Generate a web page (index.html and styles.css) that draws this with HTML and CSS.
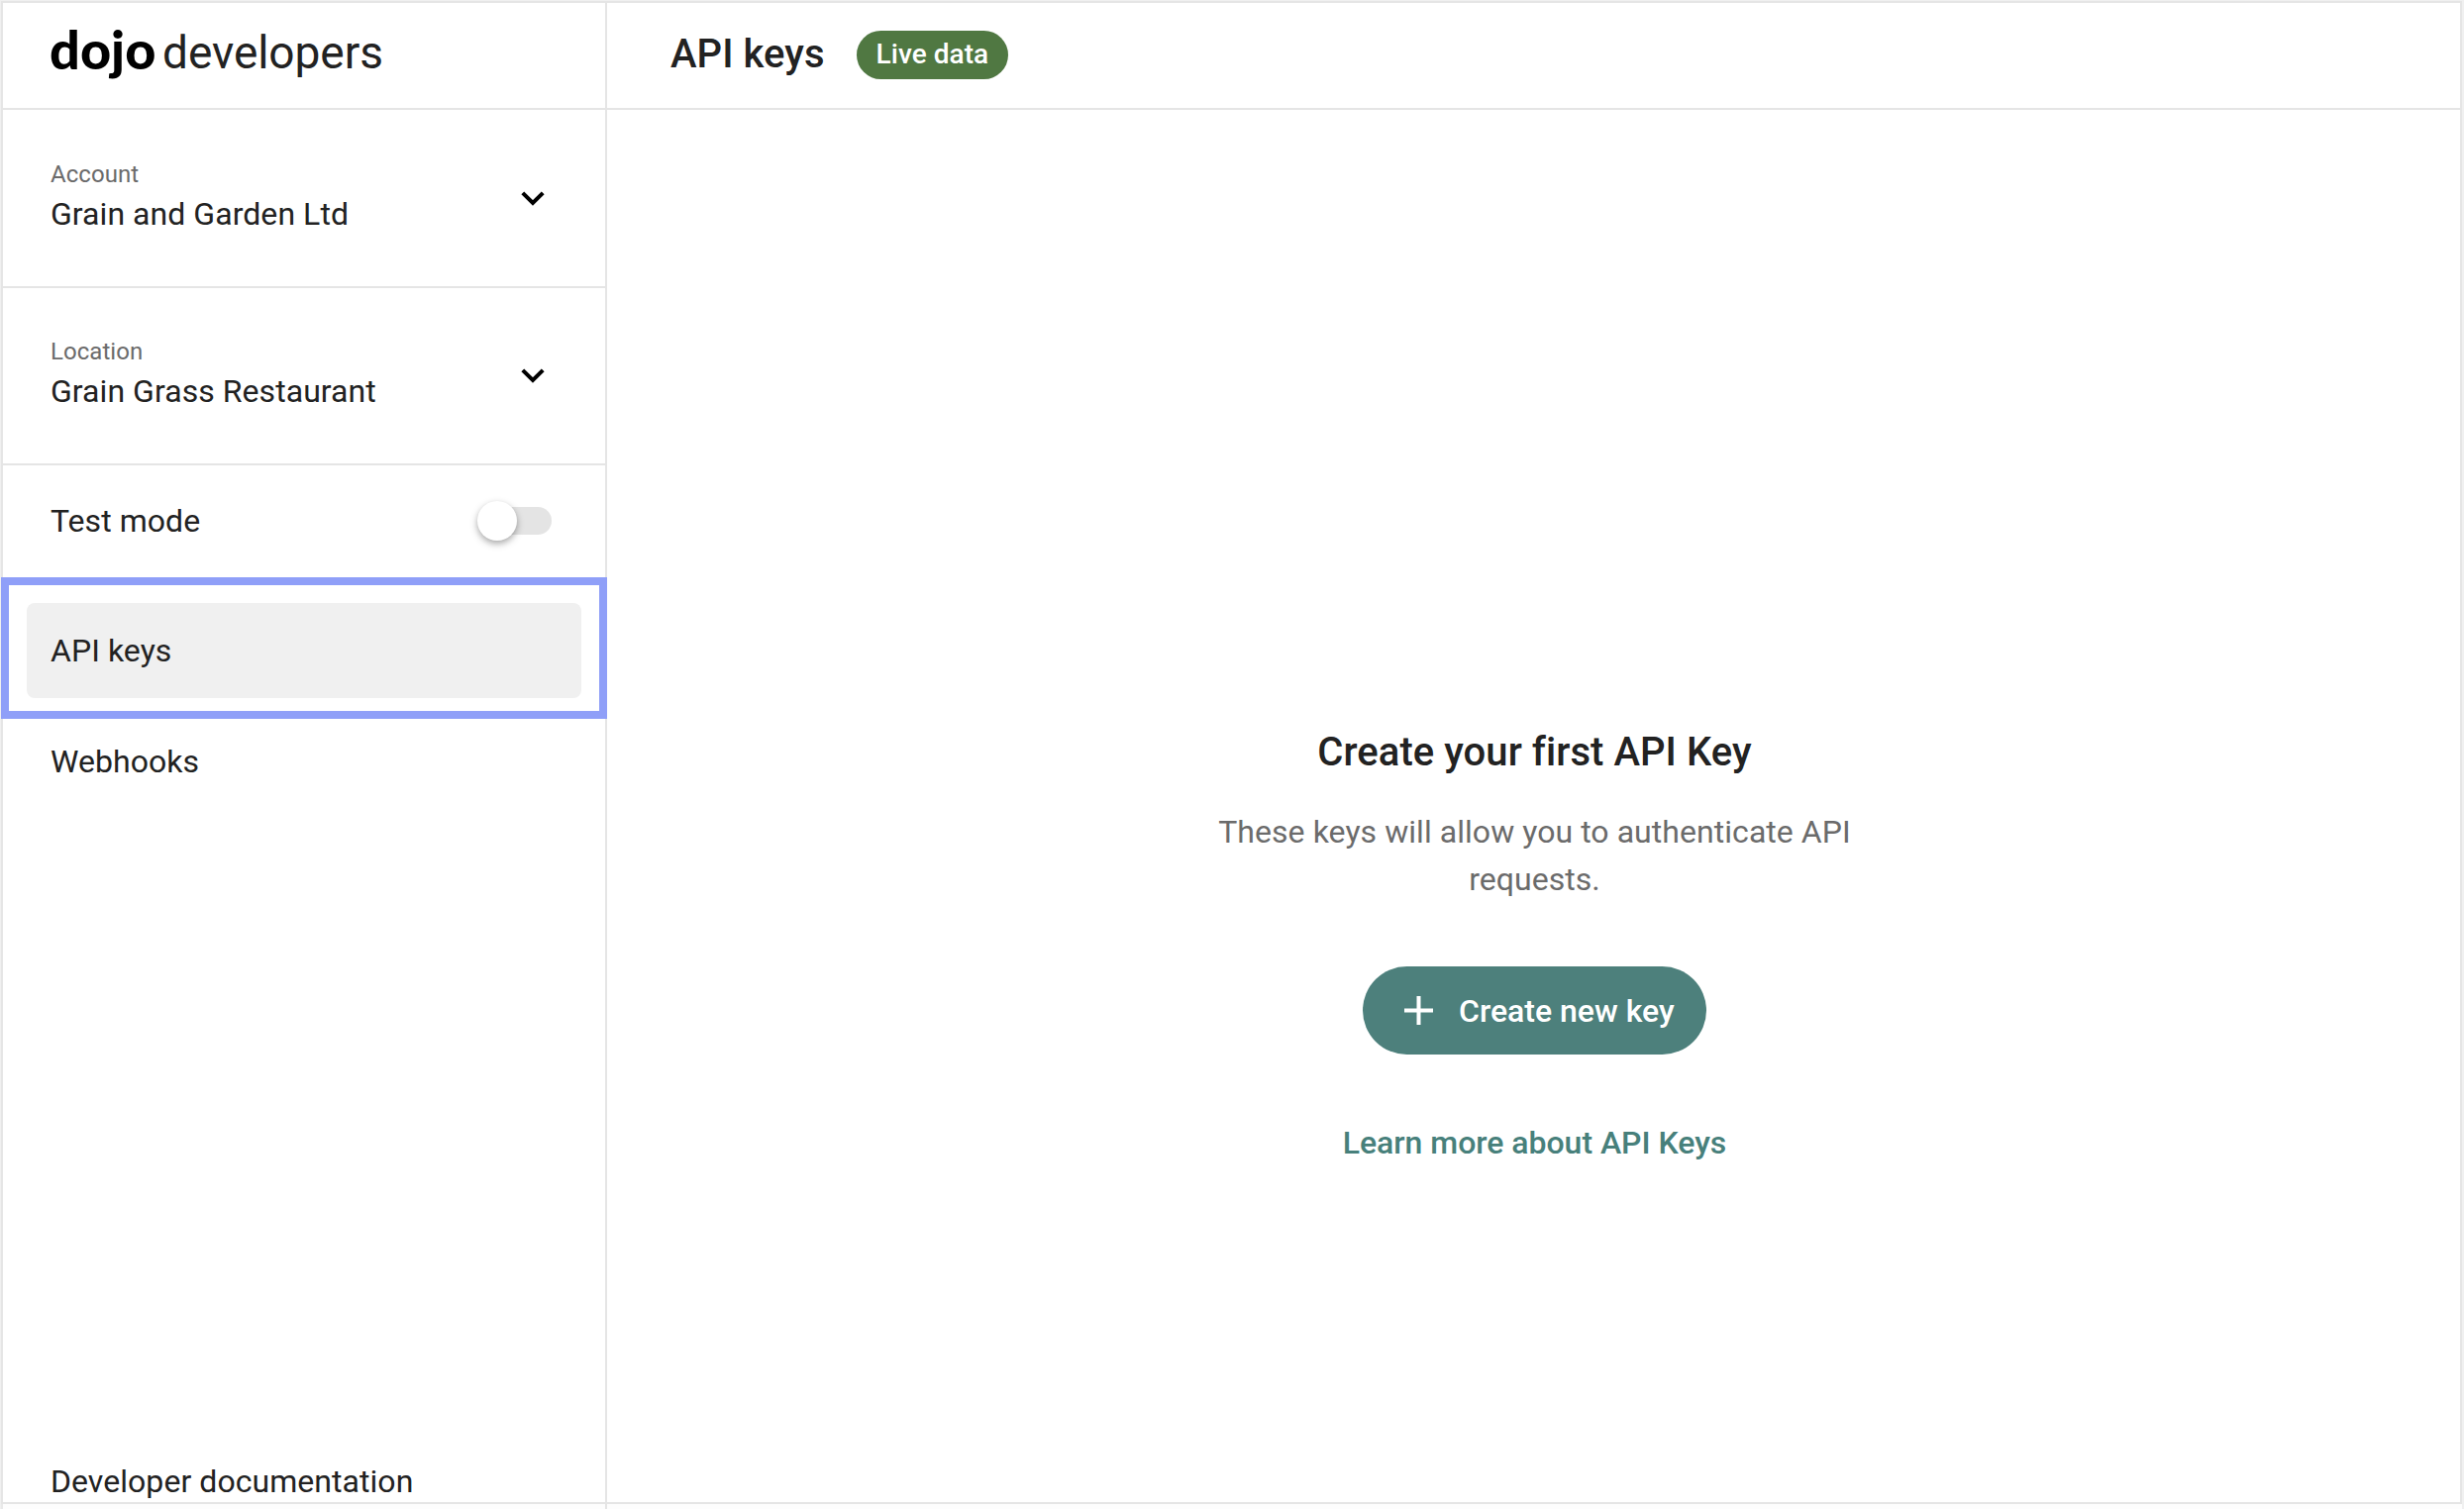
FILE: index.html
```html
<!DOCTYPE html>
<html lang="en">
<head>
<meta charset="utf-8">
<title>API keys</title>
<link rel="stylesheet" href="styles.css">
</head>
<body>
<div class="app">
  <aside class="sidebar">
    <div class="brand"><span class="brand-name">dojo</span><span class="brand-sub">developers</span></div>
    <div class="select account">
      <div><div class="select-label">Account</div><div class="select-value">Grain and Garden Ltd</div></div>
      <svg class="chevron" viewBox="0 0 24 15"><path d="M1.8 1.8 12 12 22.2 1.8" fill="none" stroke="#000" stroke-width="4"/></svg>
    </div>
    <div class="select">
      <div><div class="select-label">Location</div><div class="select-value">Grain Grass Restaurant</div></div>
      <svg class="chevron" viewBox="0 0 24 15"><path d="M1.8 1.8 12 12 22.2 1.8" fill="none" stroke="#000" stroke-width="4"/></svg>
    </div>
    <div class="mode"><span>Test mode</span><span class="toggle"><span class="thumb"></span></span></div>
    <nav class="nav">
      <div class="focus"><a class="item active">API keys</a></div>
      <a class="item hooks">Webhooks</a>
    </nav>
    <a class="docs">Developer documentation</a>
  </aside>
  <main class="main">
    <header class="top"><h1>API keys</h1><span class="badge">Live data</span></header>
    <section class="empty">
      <h2>Create your first API Key</h2>
      <p>These keys will allow you to authenticate API requests.</p>
      <button class="create"><svg class="plus" viewBox="0 0 29 29"><path d="M14.5 0V29M0 14.5H29" stroke="#fff" stroke-width="4"/></svg><span>Create new key</span></button>
      <a class="learn">Learn more about API Keys</a>
    </section>
  </main>
</div>
<div class="below"><div class="below-side"></div></div>
</body>
</html>
```
FILE: styles.css
```css
* { box-sizing: border-box; }
body { margin: 0; background: #f0f0f0; font-family: Roboto, sans-serif; font-size: 32px; line-height: 48px; letter-spacing: .05px; color: #222; }
.app { display: flex; width: 2485px; height: 1518px; margin: 1px 0 0 1px; border: 2px solid #e5e5e5; background: #fff; }
.below { display: flex; width: 2485px; height: 5px; margin-left: 1px; border: solid #e9e9e9; border-width: 0 0 0 2px; background: #fdfdfd; }
.below-side { width: 610px; border-right: 2px solid #e5e5e5; }
.sidebar { display: flex; flex-direction: column; width: 610px; border-right: 2px solid #e5e5e5; }
.brand { display: flex; height: 108px; padding: 26px 0 0 47px; border-bottom: 2px solid #e5e5e5; }
.brand-name { width: 114px; margin-top: -3px; font: 900 54px/48px Lato, sans-serif; color: #000; }
.brand-sub { font-size: 46px; letter-spacing: -.05px; }
.select { display: flex; justify-content: space-between; height: 179px; padding: 48px 61px 0 48px; border-bottom: 2px solid #e5e5e5; }
.account { height: 180px; padding-top: 49px; }
.select-label { font-size: 24px; line-height: 32px; color: #6b6b6b; }
.chevron { width: 24px; height: 15px; margin-top: 33px; }
.mode { display: flex; justify-content: space-between; height: 113px; padding: 32px 54px 0 48px; }
.toggle { position: relative; width: 69px; height: 28px; margin-top: 10px; border-radius: 14px; background: #e4e4e4; }
.thumb { position: absolute; left: -6px; top: -6px; width: 40px; height: 40px; border-radius: 50%; background: #fff; box-shadow: 0 3px 7px rgba(0,0,0,.35); }
.focus { width: 612px; height: 143px; margin-left: -2px; padding: 18px; border: 8px solid #8f9ff8; }
.item { display: block; padding: 24px; }
.active { width: 560px; height: 96px; border-radius: 8px; background: #f0f0f0; }
.hooks { padding: 19px 48px; }
.docs { margin: auto 0 -3px 48px; }
.main { flex: 1; }
.top { display: flex; height: 108px; padding: 28px 64px; border-bottom: 2px solid #e5e5e5; }
h1, h2 { margin: 0; font-size: 40px; font-weight: 500; }
.badge { height: 49px; margin-left: 32px; padding: 0 20px; border-radius: 25px; background: #507842; color: #fff; font-size: 28px; font-weight: 500; }
.empty { display: flex; flex-direction: column; align-items: center; padding: 625px 0 0 2px; }
p { width: 680px; margin: 32px 0 0; text-align: center; color: #6b6b6b; }
.create { display: flex; align-items: center; width: 347px; height: 89px; margin-top: 64px; padding: 0 0 0 42px; border: 0; border-radius: 45px; background: #4d807c; color: #fff; font: 500 32px/48px Roboto, sans-serif; }
.plus { width: 29px; height: 29px; margin-right: 26px; }
.learn { margin-top: 65px; color: #47807b; font-weight: 500; letter-spacing: -.03px; }
```
